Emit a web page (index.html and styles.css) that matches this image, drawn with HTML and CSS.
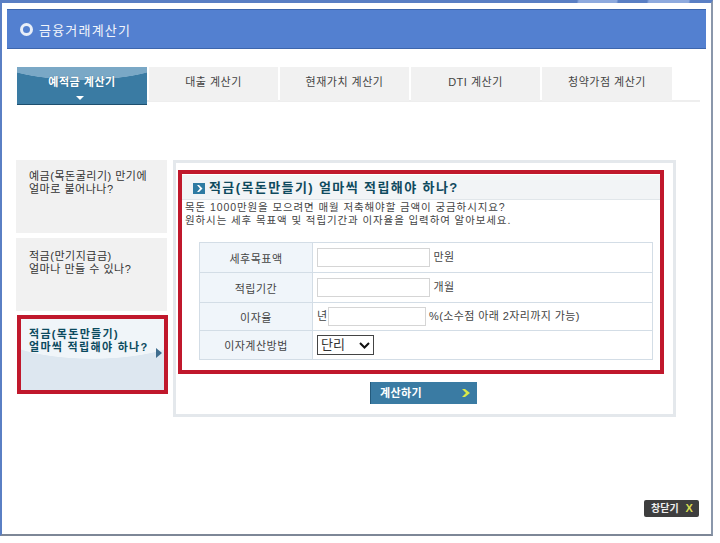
FILE: index.html
```html
<!DOCTYPE html>
<html lang="ko">
<head>
<meta charset="utf-8">
<title>금융거래계산기</title>
<link rel="stylesheet" href="styles.css">
</head>
<body>
<div class="window">
  <span class="stripes"></span>
  <header class="head">
    <span class="ring"></span>
    <h1>금융거래계산기</h1>
  </header>
  <nav class="tabs">
    <a class="tab active">예적금 계산기<i class="caret"></i></a>
    <a class="tab">대출 계산기</a>
    <a class="tab">현재가치 계산기</a>
    <a class="tab">DTI 계산기</a>
    <a class="tab wide">청약가점 계산기</a>
  </nav>
  <div class="main">
    <aside class="side">
      <a class="item">예금(목돈굴리기) 만기에<br>얼마로 불어나나?</a>
      <a class="item second">적금(만기지급금)<br>얼마나 만들 수 있나?</a>
      <a class="item current">적금(목돈만들기)<br>얼마씩 적립해야 하나?<i class="arrow"></i></a>
    </aside>
    <section class="panel">
      <div class="redbox">
        <h2 class="title"><svg class="ticon" viewBox="0 0 12 11"><rect width="12" height="11" fill="#2f7ba3"/><path d="M4 2 6 2 9.500 5.500 6 9 4 9 7 5.500Z" fill="#fff"/></svg>적금(목돈만들기) 얼마씩 적립해야 하나?</h2>
        <p class="desc">목돈 1000만원을 모으려면 매월 저축해야할 금액이 궁금하시지요?<br>원하시는 세후 목표액 및 적립기간과 이자율을 입력하여 알아보세요.</p>
        <table class="form">
          <tr class="r30"><th>세후목표액</th><td><input class="field" type="text"> 만원</td></tr>
          <tr class="r30"><th>적립기간</th><td><input class="field" type="text"> 개월</td></tr>
          <tr class="r28"><th>이자율</th><td>년<input class="field short" type="text"> %(소수점 아래 2자리까지 가능)</td></tr>
          <tr class="r29"><th>이자계산방법</th><td><span class="pickwrap"><select class="pick"><option>단리</option></select><svg class="pickarrow" viewBox="0 0 11 7"><path d="M1 1 5.500 5.500 10 1" fill="none" stroke="#111" stroke-width="2"/></svg></span></td></tr>
        </table>
      </div>
      <div class="actions">
        <a class="calc">계산하기<svg class="chev" viewBox="0 0 8 8"><path d="M0 0 3 0 8 4 3 8 0 8 4 4Z" fill="#d8e84a"/></svg></a>
      </div>
    </section>
  </div>
  <div class="foot"><a class="close">창닫기<b>X</b></a></div>
</div>
</body>
</html>
```
FILE: styles.css
```css
* { box-sizing: border-box; }
html, body { margin: 0; padding: 0; background: #fff; }
body { width: 720px; height: 543px; overflow: hidden; font-family: "Liberation Sans", "Noto Sans CJK KR", sans-serif; font-size: 11px; color: #444; }
a { display: block; }
.window { position: relative; width: 713px; height: 536px; border: solid #5a7fc4; border-width: 3px 2px 2px 2px; border-right-color: #8a97ab; border-bottom-color: #7d8797; padding: 6px 5px 0 5px; background: #fff; }
.stripes { position: absolute; top: -3px; right: -2px; width: 138px; height: 3px; background: linear-gradient(100deg, transparent 0, transparent 2px, #8eaade 4px, #8eaade 41px, transparent 43px, transparent 71px, #8eaade 73px, #8eaade 112px, transparent 114px); }
.head { height: 40px; background: #5380d0; border: 1px solid #3d66ad; border-width: 1px 0; display: flex; align-items: center; padding-left: 13px; gap: 6px; }
.ring { width: 13px; height: 13px; border-radius: 50%; border: 3.500px solid #e8eef8; background: #5380d0; }
.head h1 { margin: 0; font-size: 13px; font-weight: 400; color: #f2f5fb; letter-spacing: 1.2px; }
.tabs { display: flex; gap: 2px; margin: 18px 0 0 10px; width: 683px; height: 38px; background: linear-gradient(#fff 33px, #eee 33px, #eee 35px, #fff 35px); }
.tab { width: 129px; height: 34px; background: #f1f1f1; text-align: center; line-height: 30px; font-size: 11px; color: #444; letter-spacing: .5px; }
.tab.wide { width: 130px; }
.tab.active { position: relative; width: 130px; height: 38px; color: #fff; font-weight: 700; background: radial-gradient(90px 23px at 50% -10px, #7aa8c6 98%, transparent 100%), #3a7ba3; border-bottom: 1px solid #1d4f6e; line-height: 30px; text-shadow: 0 0 1px #2a5f80; }
.caret { position: absolute; left: 59px; bottom: 4px; border: 4px solid transparent; border-top: 4px solid #fff; border-bottom: 0; }
.main { display: flex; margin: 55px 0 0 9px; gap: 6px; }
.side { width: 151px; display: flex; flex-direction: column; gap: 5px; }
.item { height: 73px; background: #f1f1f1; padding: 10px 13px; line-height: 13px; font-size: 11px; color: #333; letter-spacing: .5px; }
.item.second { padding-top: 12px; }
.item.current { position: relative; width: 151px; height: 79px; margin: -1px -1px 0 1px; padding: 9px 8px; border: 4px solid #c0182c; color: #0b4a5e; font-weight: 700; letter-spacing: 1.3px; background: radial-gradient(100px 30px at 50% 10px, #f0f5f9 98%, transparent 100%), #dde7f0; }
.arrow { position: absolute; right: 2px; top: 29px; border: 5px solid transparent; border-left: 6px solid #3f6d8e; border-right: 0; }
.panel { width: 503px; height: 257px; border: 3px solid #e4e8ec; padding: 7px 9px 0 2px; display: flex; flex-direction: column; }
.redbox { width: 486px; height: 204px; border: 4px solid #c0182c; padding: 1px 0 0 0; }
.title { margin: 0; height: 25px; background: #f2f4f6; border-bottom: 1px solid #e1e6ea; display: flex; align-items: center; padding: 0 0 2px 11px; gap: 4px; font-size: 13px; font-weight: 700; color: #0f4a5e; letter-spacing: 1.4px; }
.ticon { width: 12px; height: 11px; margin-top: 4px; flex: none; }
.desc { margin: 0; padding: 1px 0 0 3px; height: 42px; line-height: 13px; font-size: 10.500px; color: #444; letter-spacing: .9px; }
.form { width: 454px; margin-left: 17px; border-collapse: collapse; border: 1px solid #d3dde6; table-layout: fixed; }
.r30 th { height: 30px; }
.r28 th { height: 28px; }
.r29 th { height: 29px; }
.form th { width: 113px; background: #f0f5fa; border: 1px solid #d3dde6; font-size: 11px; font-weight: 400; color: #444; letter-spacing: .5px; padding: 0; }
.form td { border: 1px solid #d3dde6; padding: 0 0 0 4px; font-size: 11px; color: #444; letter-spacing: .4px; white-space: nowrap; }
.field { width: 113px; height: 19px; border: 1px solid #d5d5d5; background: #fff; padding: 0; vertical-align: middle; margin: 0; }
.field.short { width: 98px; }
.pickwrap { position: relative; display: inline-block; vertical-align: middle; height: 20px; }
.pick { display: block; appearance: none; width: 57px; height: 20px; border: 1px solid #444; border-radius: 0; background: #fff; font-family: inherit; font-size: 13px; line-height: 15px; color: #333; padding: 0 0 2px 3px; }
.pickarrow { position: absolute; right: 4px; top: 7px; width: 11px; height: 7px; pointer-events: none; }
.actions { display: flex; justify-content: flex-start; padding: 8px 0 0 192px; }
.calc { width: 107px; height: 22px; background: #3a7ba3; border-left: 1px solid #245a7c; color: #fff; font-size: 11px; font-weight: 700; line-height: 22px; padding-left: 9px; letter-spacing: .4px; position: relative; }
.chev { position: absolute; right: 7px; top: 7px; width: 8px; height: 8px; }
.foot { display: flex; justify-content: flex-end; padding: 83px 7px 0 0; }
.close { width: 55px; height: 17px; background: #3e3e3e; border-radius: 2px; color: #eee; font-size: 10px; line-height: 16px; padding-left: 7px; font-weight: 700; }
.close b { color: #d8dc50; margin-left: 7px; font-size: 11px; }
```
